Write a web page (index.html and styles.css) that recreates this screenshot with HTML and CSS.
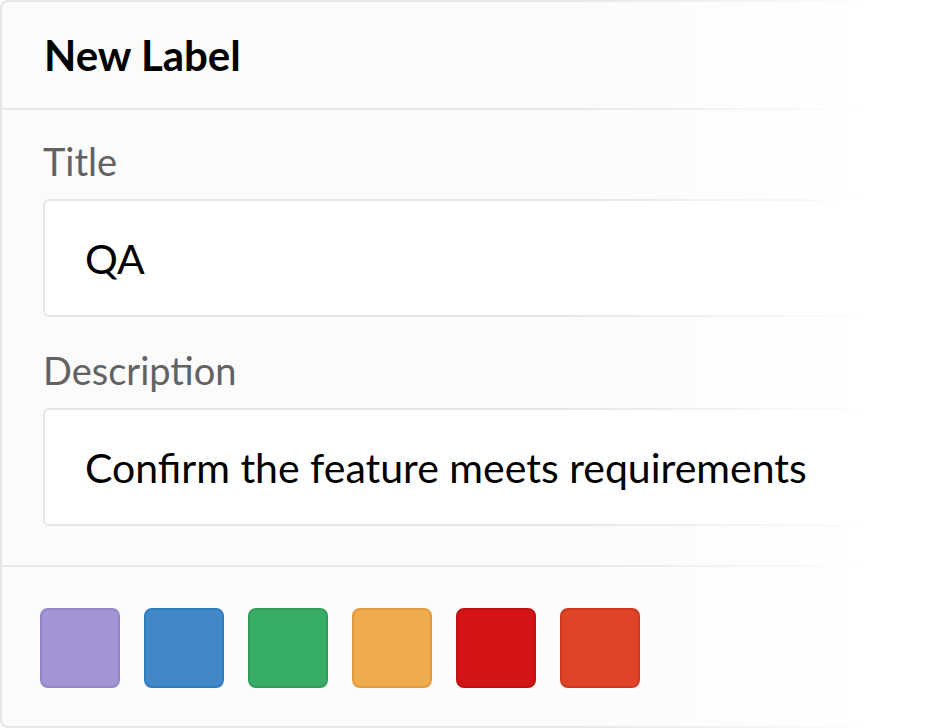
FILE: index.html
```html
<!DOCTYPE html>
<html>
<head>
<meta charset="utf-8">
<link rel="stylesheet" href="styles.css">
</head>
<body>
<div class="card">
  <div class="card-header"><span class="txt">New Label</span></div>
  <div class="card-body">
    <div class="field">
      <span class="label txt">Title</span>
      <div class="input"><span class="txt">QA</span></div>
    </div>
    <div class="field">
      <span class="label txt">Description</span>
      <div class="input"><span class="txt">Confirm the feature meets requirements</span></div>
    </div>
  </div>
  <div class="card-footer">
    <div class="swatch purple"></div>
    <div class="swatch blue"></div>
    <div class="swatch green"></div>
    <div class="swatch orange"></div>
    <div class="swatch red"></div>
    <div class="swatch vermilion"></div>
  </div>
</div>
</body>
</html>
```
FILE: styles.css
```css
html, body {
  margin: 0;
  padding: 0;
  background: #ffffff;
  overflow: hidden;
}

body {
  width: 940px;
  height: 728px;
  font-family: Lato, "Liberation Sans", sans-serif;
  color: #000;
}

.card {
  position: relative;
  z-index: 0;
  width: 940px;
  height: 728px;
  box-sizing: border-box;
  border: 2px solid #e6e6e6;
  border-right: none;
  border-radius: 8px 0 0 8px;
  background: #fbfbfb;
  display: flex;
  flex-direction: column;
}

.card::after {
  content: "";
  position: absolute;
  top: -2px;
  bottom: -2px;
  left: -2px;
  right: 0;
  z-index: 1;
  background: linear-gradient(to right, rgba(255,255,255,0) 560px, #ffffff 880px);
  pointer-events: none;
}

.txt {
  position: relative;
  z-index: 2;
}

.card-header {
  height: 106px;
  padding-left: 42px;
  border-bottom: 2px solid #e8e8e8;
  display: flex;
  align-items: center;
  font-size: 42px;
  font-weight: 700;
}

.card-body {
  padding: 27px 0 39px 41px;
  border-bottom: 2px solid #e8e8e8;
  display: flex;
  flex-direction: column;
  gap: 29px;
}

.field {
  display: flex;
  flex-direction: column;
  gap: 14px;
}

.label {
  font-size: 38px;
  line-height: 48px;
  color: #626262;
}

.input {
  height: 114px;
  box-sizing: content-box;
  border: 2px solid #e6e6e6;
  border-radius: 6px;
  background: #ffffff;
  padding-left: 40px;
  display: flex;
  align-items: center;
  font-size: 41px;
  color: #000;
}

.card-footer {
  flex: 1;
  display: flex;
  align-items: center;
  gap: 24px;
  padding-left: 38px;
  padding-top: 2px;
}

.swatch {
  position: relative;
  z-index: 2;
  flex: none;
  width: 76px;
  height: 76px;
  border: 2px solid;
  border-radius: 8px;
}

.purple { background: #a195d3; border-color: #9386c7; }
.blue { background: #4389c9; border-color: #2f7cc0; }
.green { background: #38ad67; border-color: #2f9c5a; }
.orange { background: #efac4e; border-color: #e39a3c; }
.red { background: #d21416; border-color: #bf1012; }
.vermilion { background: #e04428; border-color: #d43520; }
```
